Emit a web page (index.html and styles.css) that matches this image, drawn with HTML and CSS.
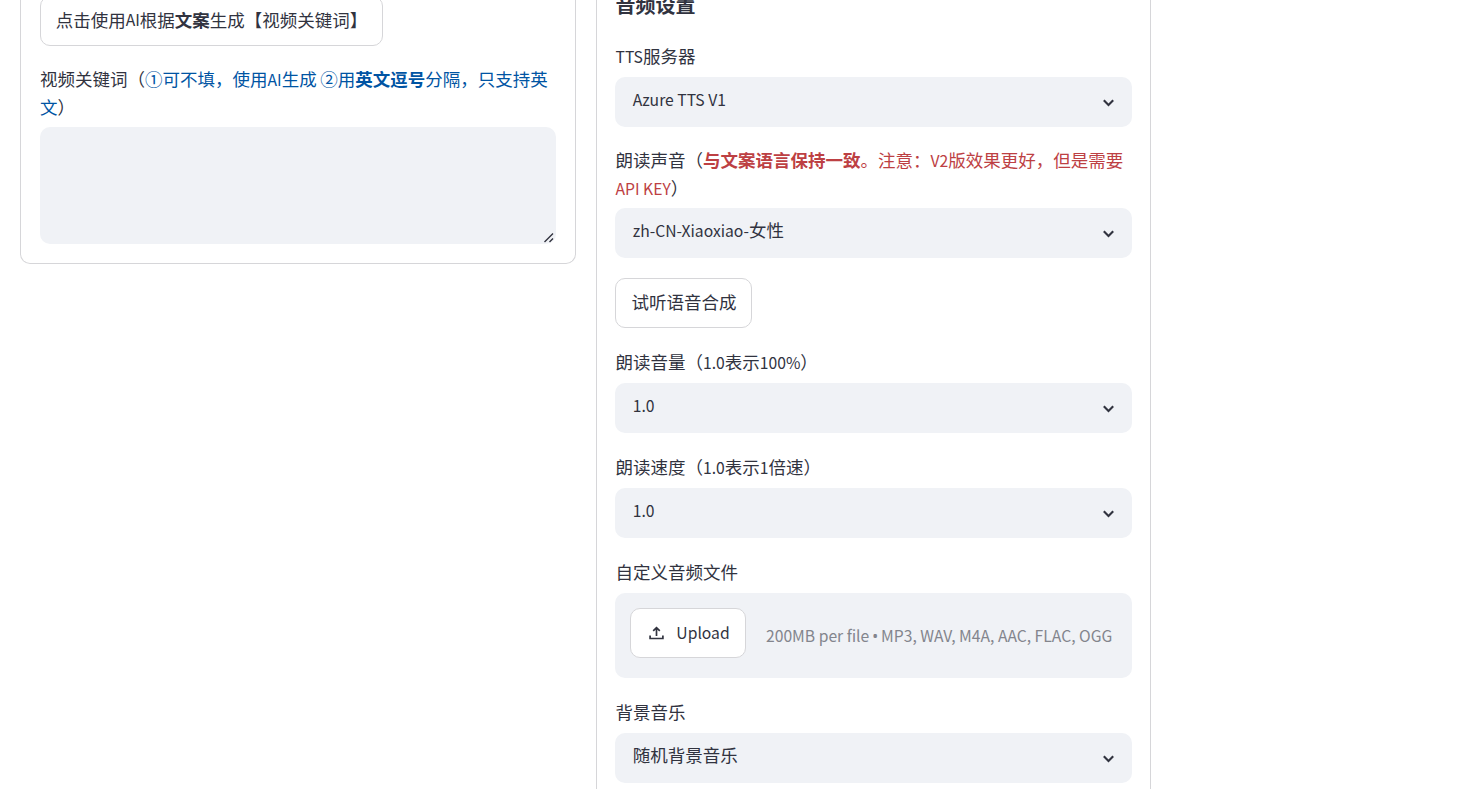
FILE: index.html
```html
<!DOCTYPE html>
<html lang="zh-CN">
<head>
<meta charset="utf-8">
<title>音频设置</title>
<link rel="stylesheet" href="styles.css">
</head>
<body>
<main class="columns">
  <section class="panel panel-script">
    <button class="btn btn-keywords">点击使用<span class="en">AI</span>根据<strong>文案</strong>生成【视频关键词】</button>
    <div class="field">
      <label class="label">视频关键词（<span class="blue">①可不填，使用<span class="en">AI</span>生成<span class="en"> </span>②用<strong>英文逗号</strong>分隔，只支持英<br>文</span>）</label>
      <div class="textarea">
        <svg class="grip" width="11" height="11" viewBox="0 0 11 11"><path d="M1.5 10L10 1.5M6.5 10L10 6.5"/></svg>
      </div>
    </div>
  </section>
  <section class="panel panel-audio">
    <h2 class="heading">音频设置</h2>
    <div class="field">
      <label class="label"><span class="en">TTS</span>服务器</label>
      <div class="select"><span class="value"><span class="en">Azure TTS V1</span></span><svg class="chevron" width="13" height="8" viewBox="0 0 13 8"><path d="M1.8 1.2L6.5 5.9L11.2 1.2"/></svg></div>
    </div>
    <div class="field">
      <label class="label">朗读声音（<span class="red"><strong>与文案语言保持一致</strong>。注意：<span class="en">V2</span>版效果更好，但是需要<br><span class="en">API KEY</span></span>）</label>
      <div class="select"><span class="value"><span class="en">zh-CN-Xiaoxiao-</span>女性</span><svg class="chevron" width="13" height="8" viewBox="0 0 13 8"><path d="M1.8 1.2L6.5 5.9L11.2 1.2"/></svg></div>
    </div>
    <button class="btn btn-preview">试听语音合成</button>
    <div class="field">
      <label class="label">朗读音量（<span class="en">1.0</span>表示<span class="en">100%</span>）</label>
      <div class="select"><span class="value"><span class="en">1.0</span></span><svg class="chevron" width="13" height="8" viewBox="0 0 13 8"><path d="M1.8 1.2L6.5 5.9L11.2 1.2"/></svg></div>
    </div>
    <div class="field">
      <label class="label">朗读速度（<span class="en">1.0</span>表示<span class="en">1</span>倍速）</label>
      <div class="select"><span class="value"><span class="en">1.0</span></span><svg class="chevron" width="13" height="8" viewBox="0 0 13 8"><path d="M1.8 1.2L6.5 5.9L11.2 1.2"/></svg></div>
    </div>
    <div class="field">
      <label class="label">自定义音频文件</label>
      <div class="dropzone">
        <button class="btn btn-upload"><svg class="upload-icon" width="15" height="14" viewBox="0 0 15 14"><path d="M7.5 10V1.6M4.2 4.9L7.5 1.6L10.8 4.9M1.1 9.4V12.5H13.9V9.4"/></svg><span class="en">Upload</span></button>
        <span class="hint en">200MB per file <span class="dot">•</span> MP3, WAV, M4A, AAC, FLAC, OGG</span>
      </div>
    </div>
    <div class="field">
      <label class="label">背景音乐</label>
      <div class="select"><span class="value">随机背景音乐</span><svg class="chevron" width="13" height="8" viewBox="0 0 13 8"><path d="M1.8 1.2L6.5 5.9L11.2 1.2"/></svg></div>
    </div>
  </section>
</main>
</body>
</html>
```
FILE: styles.css
```css
* { box-sizing: border-box; }

body {
  margin: 0;
  height: 789px;
  overflow: hidden;
  background: #fff;
  color: #31333f;
  font-family: "Noto Sans CJK SC", "Noto Sans", sans-serif;
  font-size: 17.5px;
  line-height: 28px;
  white-space: nowrap;
}

strong { font-weight: 700; }

/* Latin glyphs are drawn slightly smaller than the ideographs. */
.en { font-size: 15.7px; line-height: 1; white-space: pre; }

.columns {
  display: flex;
  align-items: flex-start;
  gap: 20px;
  padding-left: 20px;
}

.panel {
  display: flex;
  flex-direction: column;
  align-items: flex-start;
  gap: 20px;
  border: 1px solid #d6d6d9;
  border-top: 0;
}

.panel-script {
  width: 556px;
  padding: 0 19px 19px;
  border-radius: 0 0 10px 10px;
}

.panel-audio {
  width: 555px;
  height: 810px;
  padding: 0 18px;
}

.panel-audio .label { padding-left: 0.5px; }

.heading {
  margin: -7px 0 5px;
  padding-left: 0.5px;
  font-size: 20px;
  line-height: 24px;
  font-weight: 700;
}

.field { width: 100%; }

.label {
  display: block;
  min-height: 30px;
  margin-top: -1px;
  margin-bottom: 6px;
}

.blue { color: #0054a3; }
.red { color: #bd4043; }

.label:not(:has(br)) { padding-top: 1px; }

.btn {
  display: flex;
  align-items: center;
  justify-content: center;
  flex: none;
  height: 50px;
  padding: 0 15px 2px;
  border: 1px solid #d6d6d9;
  border-radius: 10px;
  background: #fff;
  color: inherit;
  font: inherit;
}

.btn-keywords {
  width: 343px;
  margin-top: -4px;
}

.btn-preview {
  width: 137px;
  padding-left: 16px;
}

.select {
  display: flex;
  align-items: center;
  justify-content: space-between;
  height: 50px;
  padding: 0 17px 0 17.8px;
  border-radius: 10px;
  background: #f0f2f6;
}

.value { padding-bottom: 6px; }

.chevron,
.grip,
.upload-icon {
  fill: none;
  stroke: #31333f;
  stroke-width: 2.1;
}

.chevron { margin-top: 2px; }

.textarea {
  display: flex;
  align-items: flex-end;
  justify-content: flex-end;
  height: 117px;
  padding: 0 2px 1px;
  border-radius: 10px;
  background: #f0f2f6;
}

.grip { stroke-width: 1.4; }

.dropzone {
  display: flex;
  align-items: flex-start;
  gap: 20px;
  height: 85px;
  padding: 15px;
  border-radius: 10px;
  background: #f0f2f6;
}

.btn-upload {
  width: 116px;
  gap: 12px;
  padding: 0 14px 0 17px;
}

.upload-icon { stroke-width: 1.7; }

.hint {
  padding-top: 20px;
  color: #83858d;
}

.dot {
  margin: 0 -0.6px;
  font-family: "Noto Sans", sans-serif;
}
```
